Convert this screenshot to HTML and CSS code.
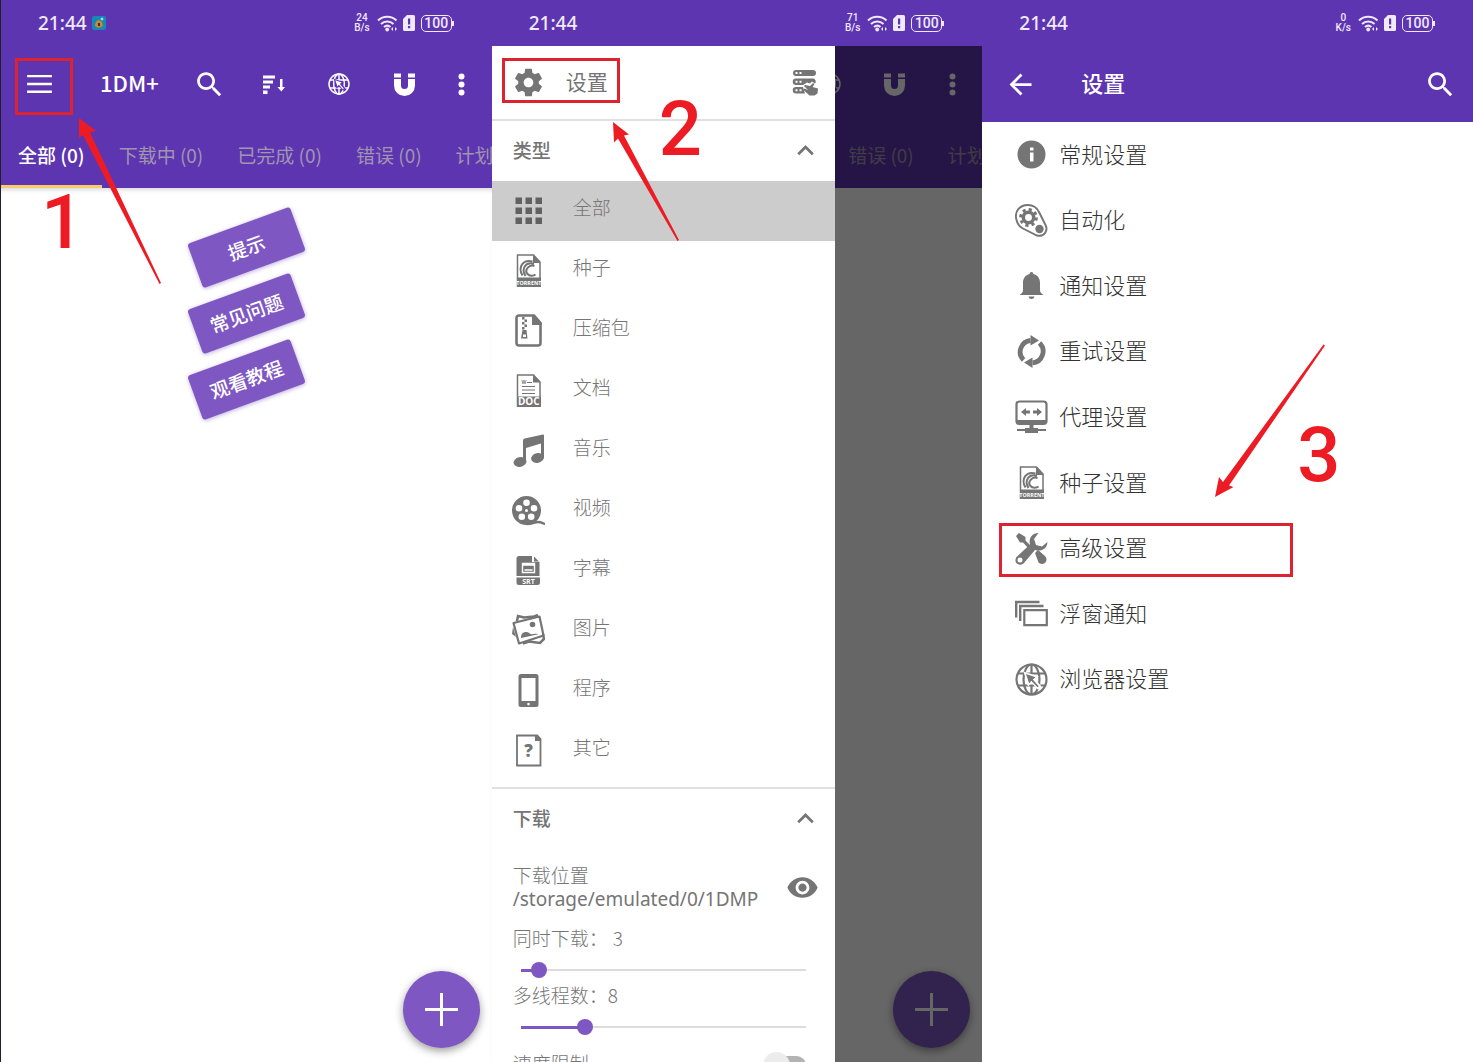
FILE: index.html
```
<!DOCTYPE html>
<html lang="zh-CN">
<head>
  <meta charset="UTF-8">
  <meta name="viewport" content="width=device-width, initial-scale=1.0">
  <title>1DM+ 设置</title>
  <link rel="stylesheet" href="styles.css">
</head>
<body>
  <!-- Icon sprite -->
  <svg class="sprite" aria-hidden="true">
    <symbol id="i-menu" viewBox="0 0 24 24"><path d="M3 18.200h18v-1.800H3v1.800zM3 12.500h18v-1.800H3v1.800zM3 5v1.800h18V5H3z"/></symbol>
    <symbol id="i-search" viewBox="0 0 24 24"><path d="M15.5 14h-.79l-.28-.27C15.41 12.59 16 11.11 16 9.5 16 5.91 13.09 3 9.5 3S3 5.91 3 9.5 5.91 16 9.5 16c1.61 0 3.09-.59 4.23-1.57l.27.28v.79l5 4.99L20.49 19l-4.99-5zm-6 0C7.01 14 5 11.99 5 9.5S7.01 5 9.5 5 14 7.01 14 9.5 11.99 14 9.5 14z"/></symbol>
    <symbol id="i-back" viewBox="0 0 24 24"><path d="M20 11H7.83l5.59-5.59L12 4l-8 8 8 8 1.41-1.41L7.83 13H20v-2z"/></symbol>
    <symbol id="i-up" viewBox="0 0 24 24"><path d="M12 8l-6 6 1.41 1.41L12 10.83l4.59 4.58L18 14z"/></symbol>
    <symbol id="i-eye" viewBox="0 0 24 24"><path d="M12 4.5C7 4.5 2.73 7.61 1 12c1.73 4.39 6 7.5 11 7.5s9.27-3.11 11-7.5c-1.73-4.39-6-7.5-11-7.5zM12 17c-2.76 0-5-2.24-5-5s2.24-5 5-5 5 2.24 5 5-2.24 5-5 5zm0-8c-1.66 0-3 1.34-3 3s1.34 3 3 3 3-1.34 3-3-1.34-3-3-3z"/></symbol>
    <symbol id="i-gear" viewBox="0 0 24 24"><path d="M19.43 12.98c.04-.32.07-.64.07-.98s-.03-.66-.07-.98l2.11-1.65c.19-.15.24-.42.12-.64l-2-3.46c-.12-.22-.39-.3-.61-.22l-2.49 1c-.52-.4-1.08-.73-1.69-.98l-.38-2.65C14.46 2.18 14.25 2 14 2h-4c-.25 0-.46.18-.49.42l-.38 2.65c-.61.25-1.17.59-1.69.98l-2.49-1c-.23-.09-.49 0-.61.22l-2 3.46c-.13.22-.07.49.12.64l2.11 1.65c-.04.32-.07.65-.07.98s.03.66.07.98l-2.11 1.65c-.19.15-.24.42-.12.64l2 3.46c.12.22.39.3.61.22l2.49-1c.52.4 1.08.73 1.69.98l.38 2.65c.03.24.24.42.49.42h4c.25 0 .46-.18.49-.42l.38-2.65c.61-.25 1.17-.59 1.69-.98l2.49 1c.23.09.49 0 .61-.22l2-3.46c.12-.22.07-.49-.12-.64l-2.11-1.65zM12 15.5c-1.93 0-3.5-1.57-3.5-3.5s1.57-3.5 3.5-3.5 3.5 1.57 3.5 3.5-1.57 3.5-3.5 3.5z"/></symbol>
    <symbol id="i-sort" viewBox="0 0 33 33"><path d="M5 7.500h12v3H5zM5 12.500h10v3H5zM5 17.500h7v3H5zM5 22.500h4.500v3.500H5zM22 11h2.500v8H27l-3.700 4.500L19.500 19H22z"/></symbol>
    <symbol id="i-globe" viewBox="0 0 33 33">
      <g fill="none" stroke="currentColor" stroke-width="2.200"><circle cx="16.500" cy="16.500" r="15"/><ellipse cx="16.500" cy="16.500" rx="8" ry="15"/><path d="M16.500 1.500v12M3 10.500h27M3 22.500h27M16.500 22v9"/></g>
      <path class="globe-cut" d="M8.500 8.500l15.500 5-3.500 3 6 7-3.500 3.200-6.500-7-3.500 4z"/>
      <path d="M11 11l9.500 3.200-2.800 2.200 6 6.800-1.200 1.100-6.200-6.500-2.100 2.600z"/>
    </symbol>
    <symbol id="i-magnet" viewBox="0 0 33 33"><path d="M6 5.500h7v4H6zM20 5.500h7v4h-7zM6 11h7v6.500a3.500 3.500 0 0 0 7 0V11h7v6.500a10.500 10.500 0 0 1-21 0z"/></symbol>
    <symbol id="i-dots" viewBox="0 0 33 33"><circle cx="16.500" cy="8.500" r="3"/><circle cx="16.500" cy="16.500" r="3"/><circle cx="16.500" cy="24.500" r="3"/></symbol>
    <symbol id="i-wifi" viewBox="0 0 21 17">
      <path d="M1 5.500a13.500 13.500 0 0 1 18.500 0M4 9a9 9 0 0 1 12.500 0M7 12a5 5 0 0 1 6.500 0" fill="none" stroke="currentColor" stroke-width="2"/>
      <circle cx="10.200" cy="14.500" r="1.900"/><path d="M14 14l2-2v4zM20 14l-2-2v4z"/>
    </symbol>
    <symbol id="i-sim" viewBox="0 0 12 16"><path fill-rule="evenodd" d="M4 0h6.500Q12 0 12 1.500v13q0 1.500-1.500 1.500h-9Q0 16 0 14.500V4zM5 3.500v6h2.200v-6zM5 11v2.200h2.200V11z"/></symbol>
    <symbol id="i-server" viewBox="0 0 33 33">
      <path fill-rule="evenodd" d="M7 4h17a3 3 0 0 1 0 6H7a3 3 0 0 1 0-6zM6.500 6v2h2V6zm4 0v2h2V6zM7 12.500h17a3 3 0 0 1 2 5l-3-2-2 2-3-1-4 2.500H7a3 3 0 0 1 0-6.500zM6.500 14.700v2h2v-2zm4 0v2h2v-2zM7 21h7l2 6.500H7a3 3 0 0 1 0-6.500zm-.500 2.200v2h2v-2zm4 0v2h2v-2z"/>
      <path d="M16 19l5 1 3-3 1.500 1-2 3 5.500 1.500-.5 5-3 2h-5l-6-5.500 1-1.500 3.500 1.500-4-4z"/>
    </symbol>
    <symbol id="i-grid" viewBox="0 0 33 33"><path d="M3.500 3.500h6.500V10H3.500zM13.500 3.500H20V10h-6.500zM23.500 3.500H30V10h-6.500zM3.500 13.500H10V20H3.500zM13.500 13.500H20V20h-6.500zM23.500 13.500H30V20h-6.500zM3.500 23.500H10V30H3.500zM13.500 23.500H20V30h-6.500zM23.500 23.500H30V30h-6.500z"/></symbol>
    <symbol id="i-torrent" viewBox="0 0 33 33">
      <path d="M5.500 1h16l6.500 7v24H5.500z" fill="none" stroke="currentColor" stroke-width="1.500"/>
      <path d="M21 1v8h7.500zM5 23.500h24V33H5z"/>
      <path d="M20.500 7.500C11 5 5.500 13 10.500 21.500M22 9.700C13.500 7.500 9 14.500 13.500 22M22.500 12c-5.500-1.800-10.500 4-7 8 2 2.200 6 2.200 8 .5" fill="none" stroke="currentColor" stroke-width="2"/>
      <text x="16.900" y="30.500" font-size="5.400" class="icon-text">TORRENT</text>
    </symbol>
    <symbol id="i-zip" viewBox="0 0 33 33">
      <path d="M7 1.500h15l6.500 7.500v20q0 2.500-2.500 2.500H7q-2.500 0-2.500-2.500V4Q4.500 1.500 7 1.500z" fill="none" stroke="currentColor" stroke-width="2.600"/>
      <path d="M20 1v10h9.500V9l-7-8zM10 3h2.500v2.500H10zM12.500 5.500H15V8h-2.500zM10 8h2.500v2.500H10zM12.500 10.500H15V13h-2.500zM10 13h2.500v2.500H10z"/>
      <path fill-rule="evenodd" d="M10.500 16h4l1 8.500h-6.500zM11 20.500v2.500h3v-2.500z"/>
    </symbol>
    <symbol id="i-doc" viewBox="0 0 33 33">
      <path d="M5.500 1h16l6.500 7v24H5.500z" fill="none" stroke="currentColor" stroke-width="1.500"/>
      <path d="M21 1v7.500h7.500zM5 22.500h24V33H5z"/>
      <path d="M15 8.500h5M10 12.500h13M10 16h13M10 19.500h13" stroke="currentColor" stroke-width="1"/>
      <text x="12" y="10" font-size="5" class="icon-text dark">W</text>
      <text x="16.800" y="31" font-size="10" class="icon-text">DOC</text>
    </symbol>
    <symbol id="i-music" viewBox="0 0 33 33"><path d="M11 6.500Q11 5 12.500 4.500L31 .5q1 0 1 1V24h-3V9.500L14 14v14h-3z"/><ellipse cx="8" cy="28" rx="6.500" ry="4.800" transform="rotate(-12 8 28)"/><ellipse cx="25.500" cy="24" rx="6.500" ry="4.800" transform="rotate(-12 25.500 24)"/></symbol>
    <symbol id="i-film" viewBox="0 0 33 33">
      <path fill-rule="evenodd" d="M14.500 2a14.500 14.500 0 1 0 0 29 14.500 14.500 0 0 0 0-29zm0 3.500a3.300 3.300 0 1 1 0 6.600 3.300 3.300 0 0 1 0-6.600zm-7.500 5.500a3.300 3.300 0 1 1 0 6.600 3.300 3.300 0 0 1 0-6.600zm15 0a3.300 3.300 0 1 1 0 6.600 3.300 3.300 0 0 1 0-6.600zM9.800 19.500a3.300 3.300 0 1 1 0 6.600 3.300 3.300 0 0 1 0-6.600zm9.400 0a3.300 3.300 0 1 1 0 6.600 3.300 3.300 0 0 1 0-6.600zM14.500 15a1.500 1.500 0 1 1 0 3 1.500 1.500 0 0 1 0-3z"/>
      <path d="M15 30c6 0 9-3 13-1.800l4 1.500" fill="none" stroke="currentColor" stroke-width="2.500" stroke-linecap="round"/>
    </symbol>
    <symbol id="i-srt" viewBox="0 0 33 33">
      <path d="M7 2h13v6h7.500v14h-23V4.500Q4.500 2 7 2zM22 2.500l5 5h-5zM4.500 23.500h23.500v5Q28 31 25.500 31H7q-2.500 0-2.500-2.500z"/>
      <path d="M10.500 9.500h12v9h-12zM10.500 11h12M12.500 16h8" fill="none" stroke="#fff" stroke-width="1.400"/>
      <text x="16.500" y="29.700" font-size="7" class="icon-text">SRT</text>
    </symbol>
    <symbol id="i-image" viewBox="0 0 33 33">
      <path d="M5 7l1-5 6 1.500 10-1 4-1.500M31 20l1 5-4 4-11-1.500-6 2" fill="none" stroke="currentColor" stroke-width="2.500"/>
      <path d="M1.500 9l26-6.500 4 19L7 29.500z" fill="none" stroke="currentColor" stroke-width="2.200" stroke-linejoin="round"/>
      <circle cx="20.500" cy="10.500" r="2.800"/>
      <path d="M9 24c0-4 2-6 5-6 3 0 4 2.500 6 2.200 2-.4 3-.7 6.500 0zM1 13L0 20l4 3z"/>
    </symbol>
    <symbol id="i-phone" viewBox="0 0 33 33"><path fill-rule="evenodd" d="M9 0h15q2.500 0 2.500 2.500v28Q26.500 33 24 33H9q-2.500 0-2.500-2.500v-28Q6.500 0 9 0zm.5 4v23h14V4zm7 24.800a1.300 1.300 0 1 0 0 2.600 1.300 1.300 0 0 0 0-2.600z"/></symbol>
    <symbol id="i-other" viewBox="0 0 33 33">
      <path d="M5 1.500h20l3.500 3.500v26.500H5z" fill="none" stroke="currentColor" stroke-width="1.800"/><path d="M23 1v6h6V4.500L25.500 1z"/>
      <text x="16.500" y="22.500" font-size="17" class="icon-text heavy">?</text>
    </symbol>
    <symbol id="i-info" viewBox="0 0 33 33"><path fill-rule="evenodd" d="M16.500 2.500a14 14 0 1 0 0 28 14 14 0 0 0 0-28zM15 9.500v3h3.500v-3zM15 14.500v9h3.500v-9z"/></symbol>
    <symbol id="i-auto" viewBox="0 0 33 33">
      <path d="M1.500 16C-1 7 5 1 13 1c5 0 9 3 11 7l6.500 13c3 6-1.500 12-8.500 10.500L8 24.500C4 22.500 2.500 20 1.500 16z" fill="none" stroke="currentColor" stroke-width="1.900"/>
      <circle cx="13.500" cy="13.500" r="5.200" fill="none" stroke="currentColor" stroke-width="3.500"/>
      <circle cx="13.500" cy="13.500" r="8" fill="none" stroke="currentColor" stroke-width="2.800" stroke-dasharray="3.140 3.140"/>
      <circle cx="24.500" cy="25" r="4.200"/>
    </symbol>
    <symbol id="i-bell" viewBox="0 0 33 33"><path d="M16.500 3c1.200 0 1.800.8 1.800 2 4.500 1 6.700 4.500 6.700 9v7.500q0 2 3.500 4.500H4.500Q8 23.500 8 21.500V14c0-4.500 2.200-8 6.700-9 0-1.200.6-2 1.800-2zM13.500 27.500h6q-.5 2.500-3 2.500t-3-2.500z"/></symbol>
    <symbol id="i-retry" viewBox="0 0 33 33">
      <path d="M8.500 25A11.500 11.500 0 0 1 15.500 5.500M24.500 8a11.500 11.500 0 0 1-7 19.800" fill="none" stroke="currentColor" stroke-width="4.800"/>
      <path d="M15.500 0l8.500 5.500-8.500 5zM17.500 33L9 27.500l8.500-5z"/>
    </symbol>
    <symbol id="i-proxy" viewBox="0 0 33 33">
      <rect x="1.500" y="1.500" width="30" height="22.500" rx="3" fill="none" stroke="currentColor" stroke-width="2.200"/>
      <path d="M2 20h29v4H2zM14.500 24h4v4h-4zM2 29h29v2H2zM10 28h13v5H10zM6 12l5-4v2.500h4v3h-4V16zM27 12l-5-4v2.500h-4v3h4V16z"/>
    </symbol>
    <symbol id="i-tools" viewBox="0 0 33 33">
      <path d="M1 4l3-3 6.500 4v3.500l7 7-2.500 2.500-7-7.500H5zM20 21l3-3 7 6q3 3.500 0 7-4 2-6.500-.5z"/>
      <path fill-rule="evenodd" d="M23.500 1c-7 0-10 6-8.500 11.500L1.500 25c-3.500 5 2 10 7 6.500L20 18c6 2 12-1 12.500-8L27 14.500l-6-1.500-2-6zM5 25.500a2.500 2.500 0 1 1 0 5 2.500 2.500 0 0 1 0-5z"/>
    </symbol>
    <symbol id="i-float" viewBox="0 0 33 33"><path d="M1.200 20.500V5H24.500M5.200 24V9H28.500" fill="none" stroke="currentColor" stroke-width="2.400"/><path d="M9.300 13.200h22.500v15H9.300z" fill="none" stroke="currentColor" stroke-width="2.200"/></symbol>
  </svg>

  <main class="screens">
    <!-- Screen 1: home -->
    <section class="phone">
      <div class="status-bar">
        <span class="clock">21:44</span>
        <svg class="app-badge" viewBox="0 0 14 14"><rect width="14" height="14" rx="2" fill="#1787b8"/><path d="M3 10q0-5 4-6l3 2 1 4-3 1.500H5z" fill="#c98a2b"/><path d="M6 7h2v3H6z" fill="#333"/><path d="M10 1l.5 1.500L12 3l-1.500.5L10 5l-.5-1.500L8 3l1.500-.5z" fill="#fff"/></svg>
        <div class="status-icons">
          <div class="speed"><span>24</span><span>B/s</span></div>
          <svg class="wifi"><use href="#i-wifi"/></svg>
          <svg class="sim"><use href="#i-sim"/></svg>
          <span class="battery">100</span>
        </div>
      </div>
      <header class="toolbar">
        <button class="nav-btn" aria-label="菜单"><svg class="icon"><use href="#i-menu"/></svg></button>
        <h1>1DM+</h1>
        <div class="actions">
          <button aria-label="搜索"><svg class="icon"><use href="#i-search"/></svg></button>
          <button aria-label="排序"><svg class="icon"><use href="#i-sort"/></svg></button>
          <button aria-label="浏览器"><svg class="icon-small"><use href="#i-globe"/></svg></button>
          <button aria-label="磁力链接"><svg class="icon"><use href="#i-magnet"/></svg></button>
          <button class="more" aria-label="更多"><svg class="icon"><use href="#i-dots"/></svg></button>
        </div>
      </header>
      <nav class="tabs">
        <button class="active">全部 (0)</button>
        <button>下载中 (0)</button>
        <button>已完成 (0)</button>
        <button>错误 (0)</button>
        <button>计划 (0)</button>
      </nav>
      <div class="hints">
        <button>提示</button>
        <button>常见问题</button>
        <button>观看教程</button>
      </div>
      <button class="fab" aria-label="添加"></button>

      <span class="mark-box box-1"></span>
      <svg class="arrow arrow-1" viewBox="0 0 84 168"><path d="M1 1l17 13-6 1.500L83 166l-1.500 1L5 18l-4 3z"/></svg>
      <span class="mark-num num-1">1</span>
    </section>

    <!-- Screen 2: navigation drawer -->
    <section class="phone">
      <div class="status-bar">
        <span class="clock">21:44</span>
        <div class="status-icons">
          <div class="speed"><span>71</span><span>B/s</span></div>
          <svg class="wifi"><use href="#i-wifi"/></svg>
          <svg class="sim"><use href="#i-sim"/></svg>
          <span class="battery">100</span>
        </div>
      </div>
      <div class="drawer-layout">
        <aside class="drawer">
          <div class="drawer-head">
            <a href="#settings"><svg class="icon"><use href="#i-gear"/></svg><span>设置</span></a>
            <button aria-label="服务器"><svg class="icon"><use href="#i-server"/></svg></button>
          </div>
          <div class="section-head">
            <h2>类型</h2>
            <button aria-label="收起类型"><svg class="icon"><use href="#i-up"/></svg></button>
          </div>
          <ul class="types">
            <li><a href="#all" class="selected"><svg class="icon"><use href="#i-grid"/></svg><span>全部</span></a></li>
            <li><a href="#torrent"><svg class="icon"><use href="#i-torrent"/></svg><span>种子</span></a></li>
            <li><a href="#zip"><svg class="icon"><use href="#i-zip"/></svg><span>压缩包</span></a></li>
            <li><a href="#doc"><svg class="icon"><use href="#i-doc"/></svg><span>文档</span></a></li>
            <li><a href="#music"><svg class="icon"><use href="#i-music"/></svg><span>音乐</span></a></li>
            <li><a href="#video"><svg class="icon"><use href="#i-film"/></svg><span>视频</span></a></li>
            <li><a href="#subtitle"><svg class="icon"><use href="#i-srt"/></svg><span>字幕</span></a></li>
            <li><a href="#image"><svg class="icon"><use href="#i-image"/></svg><span>图片</span></a></li>
            <li><a href="#app"><svg class="icon"><use href="#i-phone"/></svg><span>程序</span></a></li>
            <li><a href="#other"><svg class="icon"><use href="#i-other"/></svg><span>其它</span></a></li>
          </ul>
          <div class="section-head">
            <h2>下载</h2>
            <button aria-label="收起下载"><svg class="icon"><use href="#i-up"/></svg></button>
          </div>
          <div class="options">
            <div class="location">
              <p>下载位置<br><span class="path">/storage/emulated/0/1DMP</span></p>
              <button aria-label="显示"><svg class="icon"><use href="#i-eye"/></svg></button>
            </div>
            <label for="parallel">同时下载：<output class="wide">3</output></label>
            <input type="range" id="parallel" min="1" max="32" value="3" style="--fill: 0.065">
            <label for="threads">多线程数：<output>8</output></label>
            <input type="range" id="threads" min="1" max="32" value="8" style="--fill: 0.226">
            <div class="switch-row">
              <label for="limit">速度限制</label>
              <input type="checkbox" id="limit" class="switch">
            </div>
          </div>
        </aside>
        <div class="behind">
          <div class="toolbar">
            <div class="actions">
              <button aria-label="浏览器"><svg class="icon-small"><use href="#i-globe"/></svg></button>
              <button aria-label="磁力链接"><svg class="icon"><use href="#i-magnet"/></svg></button>
              <button class="more" aria-label="更多"><svg class="icon"><use href="#i-dots"/></svg></button>
            </div>
          </div>
          <div class="tabs">
            <button>错误 (0)</button>
            <button>计划 (0)</button>
          </div>
          <button class="fab" aria-label="添加"></button>
          <div class="scrim"></div>
        </div>
      </div>

      <span class="mark-box box-2"></span>
      <svg class="arrow arrow-2" viewBox="0 0 68 121"><path d="M1 1l16 12.500-5 1L67 119l-1.500 1L6 17.500l-4 4z"/></svg>
      <span class="mark-num num-2">2</span>
    </section>

    <!-- Screen 3: settings -->
    <section class="phone">
      <div class="status-bar">
        <span class="clock">21:44</span>
        <div class="status-icons">
          <div class="speed"><span>0</span><span>K/s</span></div>
          <svg class="wifi"><use href="#i-wifi"/></svg>
          <svg class="sim"><use href="#i-sim"/></svg>
          <span class="battery">100</span>
        </div>
      </div>
      <header class="toolbar">
        <button class="nav-btn" aria-label="返回"><svg class="icon"><use href="#i-back"/></svg></button>
        <h1>设置</h1>
        <div class="actions">
          <button aria-label="搜索"><svg class="icon"><use href="#i-search"/></svg></button>
        </div>
      </header>
      <ul class="settings">
        <li><a href="#general"><svg class="icon"><use href="#i-info"/></svg><span>常规设置</span></a></li>
        <li><a href="#automation"><svg class="icon"><use href="#i-auto"/></svg><span>自动化</span></a></li>
        <li><a href="#notify"><svg class="icon"><use href="#i-bell"/></svg><span>通知设置</span></a></li>
        <li><a href="#retry"><svg class="icon"><use href="#i-retry"/></svg><span>重试设置</span></a></li>
        <li><a href="#proxy"><svg class="icon"><use href="#i-proxy"/></svg><span>代理设置</span></a></li>
        <li><a href="#torrents"><svg class="icon"><use href="#i-torrent"/></svg><span>种子设置</span></a></li>
        <li><a href="#advanced"><svg class="icon"><use href="#i-tools"/></svg><span>高级设置</span></a></li>
        <li><a href="#float"><svg class="icon"><use href="#i-float"/></svg><span>浮窗通知</span></a></li>
        <li><a href="#browser"><svg class="icon"><use href="#i-globe"/></svg><span>浏览器设置</span></a></li>
      </ul>

      <span class="mark-box box-3"></span>
      <svg class="arrow arrow-3" viewBox="0 0 112 156"><path d="M1 154L5 134l4 5L109.500 1.500l1.500 1L15 142.500l4.500 1.500z"/></svg>
      <span class="mark-num num-3">3</span>
    </section>
  </main>
</body>
</html>
```
FILE: styles.css
```
/* General Styles */
* {
  box-sizing: border-box;
}

body {
  margin: 0;
  font-family: 'Noto Sans CJK SC', sans-serif;
  background-color: #fff;
  color: #757575;
}

h1, h2, p, ul {
  margin: 0;
  padding: 0;
}

ul {
  list-style: none;
}

a {
  color: inherit;
  text-decoration: none;
}

button {
  padding: 0;
  border: none;
  background: none;
  color: inherit;
  font: inherit;
  cursor: pointer;
}

.sprite {
  display: none;
}

.icon {
  width: 33px;
  height: 33px;
  flex: none;
  display: block;
  fill: currentColor;
}

.icon-small {
  --cut: #5e35b1;
  width: 22px;
  height: 22px;
  display: block;
  fill: currentColor;
}

.icon-text {
  fill: #fff;
  font-family: 'Open Sans', sans-serif;
  font-weight: bold;
  text-anchor: middle;
}

.icon-text.dark {
  fill: currentColor;
}

.icon-text.heavy {
  fill: currentColor;
  font-weight: 800;
}

.globe-cut {
  fill: var(--cut, #fff);
}

/* Layout */
.screens {
  display: grid;
  grid-template-columns: repeat(3, minmax(0, 1fr));
  height: 100vh;
  border-left: 1px solid #22202b;
}

.phone {
  position: relative;
  display: flex;
  flex-direction: column;
  min-height: 0;
  overflow: hidden;
}

/* Status Bar */
.status-bar {
  display: flex;
  align-items: center;
  flex: none;
  height: 46px;
  padding: 0 38px 0 37px;
  background-color: #5e35b1;
  color: #f0e9fb;
}

.clock {
  font-family: 'Noto Sans', sans-serif;
  font-size: 19px;
  font-weight: 500;
}

.app-badge {
  width: 14px;
  height: 14px;
  margin-left: 5px;
}

.status-icons {
  display: flex;
  align-items: center;
  margin-left: auto;
  fill: currentColor;
}

.speed {
  display: flex;
  flex-direction: column;
  font-family: Roboto, sans-serif;
  font-size: 10px;
  font-weight: 500;
  line-height: 10px;
  text-align: center;
}

.wifi {
  width: 21px;
  height: 17px;
  margin-left: 7px;
}

.sim {
  width: 12px;
  height: 16px;
  margin-left: 5px;
}

.battery {
  position: relative;
  width: 31px;
  height: 17px;
  margin: 0 2px 0 6px;
  border: 1px solid currentColor;
  border-radius: 5px;
  font-family: Roboto, sans-serif;
  font-size: 14px;
  font-weight: 500;
  line-height: 15px;
  text-align: center;
}

.battery::after {
  content: '';
  position: absolute;
  top: 5px;
  right: -3px;
  width: 2px;
  height: 5px;
  background-color: currentColor;
}

/* Toolbar */
.toolbar {
  display: flex;
  align-items: center;
  flex: none;
  height: 76px;
  padding-left: 14px;
  background-color: #5e35b1;
  color: #fff;
}

.toolbar h1 {
  margin-left: 37px;
  padding-bottom: 4px;
  font-size: 22px;
  font-weight: 500;
}

.toolbar button {
  display: flex;
  align-items: center;
  justify-content: center;
  flex: none;
  width: 65px;
  height: 48px;
}

.toolbar .nav-btn {
  width: 48px;
}

.toolbar .more {
  width: 50px;
  margin-right: 5px;
}

.actions {
  display: flex;
  justify-content: flex-end;
  flex: 1;
  min-width: 0;
}

/* Tabs */
.tabs {
  display: flex;
  flex: none;
  height: 66px;
  overflow: hidden;
  background-color: #5e35b1;
  color: #a095ae;
}

.tabs button {
  flex: none;
  padding: 0 17px 2px;
  border-bottom: 3px solid transparent;
  border-top: 3px solid transparent;
  font-size: 19px;
  white-space: nowrap;
}

.tabs .active {
  border-bottom-color: #f5cb6c;
  color: #fff;
  font-weight: 500;
}

/* Home hints */
.hints {
  display: flex;
  flex-direction: column;
  align-items: center;
  gap: 19px;
  flex: 1;
  padding-top: 36px;
  box-shadow: inset 0 4px 4px -2px rgba(0, 0, 0, 0.15);
}

.hints button {
  min-width: 109px;
  height: 47px;
  padding: 0 16px 3px;
  border-radius: 3px;
  background-color: #7e57c2;
  color: #fff;
  font-size: 19px;
  font-weight: 500;
  box-shadow: 0 1px 4px rgba(94, 53, 177, 0.4);
  transform: rotate(-20deg);
}

/* Floating add button */
.fab {
  position: absolute;
  right: 12px;
  bottom: 14px;
  width: 77px;
  height: 77px;
  border-radius: 50%;
  background:
    linear-gradient(#fff, #fff) center / 33px 3px no-repeat,
    linear-gradient(#fff, #fff) center / 3px 33px no-repeat,
    #7e57c2;
  box-shadow: 0 3px 8px rgba(0, 0, 0, 0.4);
}

/* Drawer */
.drawer-layout {
  display: flex;
  flex: 1;
  min-height: 0;
}

.drawer {
  flex: 0 0 70%;
  overflow: hidden;
  background-color: #fff;
}

.drawer-head {
  display: flex;
  align-items: center;
  justify-content: space-between;
  height: 75px;
  padding: 0 13px 0 20px;
  border-bottom: 2px solid #e0e0e0;
}

.drawer-head a {
  display: flex;
  align-items: center;
  gap: 21px;
  font-size: 21px;
}

.drawer-head span {
  padding-bottom: 4px;
}

.section-head {
  display: flex;
  align-items: center;
  justify-content: space-between;
  height: 60px;
  padding: 0 13px 2px 21px;
}

.section-head h2 {
  padding-bottom: 2px;
  font-size: 19px;
  font-weight: 500;
}

.types {
  padding-bottom: 6px;
  border-bottom: 2px solid #e0e0e0;
}

.types a {
  display: flex;
  align-items: center;
  gap: 28px;
  height: 60px;
  padding: 0 0 2px 20px;
  font-size: 19px;
  font-weight: 300;
}

.types span {
  padding-bottom: 8px;
}

.types .selected {
  background-color: #ccc;
}

.types .selected .icon {
  color: #616161;
}

.options {
  padding: 14px 21px 0;
  font-size: 19px;
  font-weight: 300;
  line-height: 24px;
}

.options label {
  display: block;
}

.options .wide {
  margin-left: 5px;
}

.location {
  display: flex;
  align-items: center;
  justify-content: space-between;
  margin: 0 -5px 15px 0;
  line-height: 23px;
}

.path {
  font-family: 'Noto Sans', sans-serif;
  font-weight: 400;
}

input[type="range"] {
  display: block;
  width: 100%;
  height: 24px;
  margin: 8px 0 1px;
  appearance: none;
  background:
    linear-gradient(#7e57c2, #7e57c2) 8px 50% / calc((100% - 16px) * var(--fill)) 3px no-repeat,
    linear-gradient(#dcdcdc, #dcdcdc) 8px 50% / calc(100% - 16px) 2px no-repeat;
}

input[type="range"]::-webkit-slider-thumb {
  appearance: none;
  width: 16px;
  height: 16px;
  border-radius: 50%;
  background-color: #7e57c2;
}

.switch-row {
  display: flex;
  align-items: center;
  justify-content: space-between;
  margin: 12px 8px 0 0;
}

.switch {
  position: relative;
  appearance: none;
  width: 40px;
  height: 19px;
  margin: 5px 0 0;
  border-radius: 10px;
  background-color: #b3b3b3;
}

.switch::before {
  content: '';
  position: absolute;
  top: -4px;
  left: -3px;
  width: 27px;
  height: 27px;
  border-radius: 50%;
  background-color: #ececec;
}

.behind {
  position: relative;
  flex: 1;
  min-width: 0;
  overflow: hidden;
  background-color: #fff;
}

.behind .toolbar {
  padding: 0;
}

.behind .tabs button:first-child {
  padding-left: 13px;
}

.scrim {
  position: absolute;
  inset: 0;
  background-color: rgba(0, 0, 0, 0.6);
}

/* Settings list */
.settings {
  display: grid;
  grid-auto-rows: 1fr;
  min-height: 590px;
}

.settings a {
  display: flex;
  align-items: center;
  gap: 11px;
  height: 100%;
  padding-left: 33px;
  color: #333;
  font-size: 22px;
  font-weight: 300;
}

.settings span {
  padding-bottom: 4px;
}

.settings .icon {
  color: #757575;
}

/* Step marks */
.mark-box {
  position: absolute;
  border: 3px solid #dc2430;
  pointer-events: none;
}

.box-1 {
  top: 58px;
  left: 14px;
  width: 58px;
  height: 57px;
}

.box-2 {
  top: 58px;
  left: 10px;
  width: 118px;
  height: 45px;
}

.box-3 {
  top: 523px;
  left: 17px;
  width: 294px;
  height: 54px;
}

.arrow {
  position: absolute;
  fill: #ed1c24;
  pointer-events: none;
}

.arrow-1 {
  top: 117px;
  left: 77px;
  width: 84px;
  height: 168px;
}

.arrow-2 {
  top: 121px;
  left: 120px;
  width: 68px;
  height: 121px;
}

.arrow-3 {
  top: 343px;
  left: 232px;
  width: 112px;
  height: 156px;
}

.mark-num {
  position: absolute;
  color: #ed1c24;
  font-family: 'Liberation Sans', sans-serif;
  font-size: 76px;
  font-weight: 700;
  line-height: 76px;
}

.num-1 {
  top: 184px;
  left: 40px;
}

.num-2 {
  top: 91px;
  left: 167px;
}

.num-3 {
  top: 417px;
  left: 315px;
}

.mark-num {
  font-family: Roboto, sans-serif;
  font-weight: 500;
}
```
